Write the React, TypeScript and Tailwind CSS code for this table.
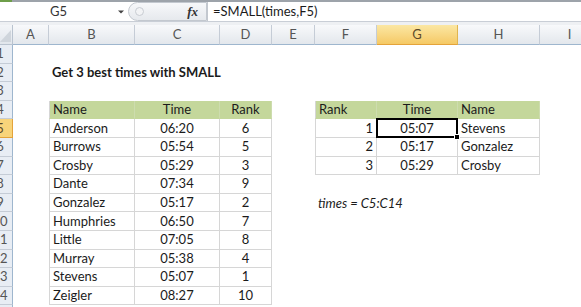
import React from "react";

type Cell = {
  text?: string;
  align?: "left" | "center" | "right";
  kind?: "head" | "body";
  bold?: boolean;
  italic?: boolean;
  overflow?: boolean;
  selected?: boolean;
};

const COLS = [
  { key: "A", w: 36 },
  { key: "B", w: 86 },
  { key: "C", w: 85 },
  { key: "D", w: 52 },
  { key: "E", w: 43 },
  { key: "F", w: 62 },
  { key: "G", w: 81 },
  { key: "H", w: 82 },
  { key: "I", w: 60 },
];

const left = [
  ["Anderson", "06:20", "6"],
  ["Burrows", "05:54", "5"],
  ["Crosby", "05:29", "3"],
  ["Dante", "07:34", "9"],
  ["Gonzalez", "05:17", "2"],
  ["Humphries", "06:50", "7"],
  ["Little", "07:05", "8"],
  ["Murray", "05:38", "4"],
  ["Stevens", "05:07", "1"],
  ["Zeigler", "08:27", "10"],
];

const right = [
  ["1", "05:07", "Stevens"],
  ["2", "05:17", "Gonzalez"],
  ["3", "05:29", "Crosby"],
];

function buildRows(): Record<string, Cell>[] {
  const rows: Record<string, Cell>[] = [];
  for (let r = 1; r <= 15; r++) rows.push({});
  rows[1].B = { text: "Get 3 best times with SMALL", bold: true, overflow: true };
  rows[3].B = { text: "Name", kind: "head", align: "left" };
  rows[3].C = { text: "Time", kind: "head", align: "center" };
  rows[3].D = { text: "Rank", kind: "head", align: "center" };
  rows[3].F = { text: "Rank", kind: "head", align: "left" };
  rows[3].G = { text: "Time", kind: "head", align: "center" };
  rows[3].H = { text: "Name", kind: "head", align: "left" };
  left.forEach((d, i) => {
    rows[4 + i].B = { text: d[0], kind: "body", align: "left" };
    rows[4 + i].C = { text: d[1], kind: "body", align: "center" };
    rows[4 + i].D = { text: d[2], kind: "body", align: "center" };
  });
  right.forEach((d, i) => {
    rows[4 + i].F = { text: d[0], kind: "body", align: "right" };
    rows[4 + i].G = { text: d[1], kind: "body", align: "center", selected: i === 0 };
    rows[4 + i].H = { text: d[2], kind: "body", align: "left" };
  });
  rows[8].F = { text: "times = C5:C14", italic: true, overflow: true };
  return rows;
}

const FONT = { fontFamily: "Lato, 'Open Sans', sans-serif" };

function SheetCell({ cell, w, first, firstCol }: { cell?: Cell; w: number; first: boolean; firstCol: boolean }) {
  const c = cell || {};
  const alignCls =
    c.align === "center" ? "justify-center" : c.align === "right" ? "justify-end pr-[3px]" : "justify-start pl-[3px]";
  let boxCls = "";
  if (c.kind === "head") {
    boxCls = "bg-[#c4d79b] border-r border-b border-r-[#cddcae] border-b-[#c4d79b]";
  } else if (c.kind === "body") {
    boxCls = "bg-white border-r border-b border-[#d6d6d6]";
  }
  if (c.kind && firstCol) boxCls += " border-l border-l-[#d6d6d6]";
  return (
    <div
      className={`relative flex h-full shrink-0 items-center ${alignCls} ${boxCls}`}
      style={{ width: w }}
    >
      {c.text && (
        <span
          className={`whitespace-nowrap text-[13px] leading-none text-[#1b1b1b] ${c.bold ? "font-bold" : ""} ${
            c.italic ? "italic" : ""
          } ${c.overflow ? "relative z-10" : ""}`}
        >
          {c.text}
        </span>
      )}
      {c.selected && (
        <div className="pointer-events-none absolute -left-[1px] -top-[1px] -right-[1px] -bottom-[1px] z-20 border-2 border-black">
          <div className="absolute -bottom-[4px] -right-[4px] h-[6px] w-[6px] border border-white bg-black" />
        </div>
      )}
    </div>
  );
}

export default function App() {
  const rows = buildRows();
  const firstColFor: Record<string, boolean> = { B: true, F: true };
  return (
    <div className="h-[307px] w-[581px] overflow-hidden bg-white" style={FONT}>
      {/* top thin line */}
      <div className="flex h-[2px]">
        <div className="w-[12px] bg-[#6e9e4a]" />
        <div className="flex-1 bg-[#9da3aa]" />
      </div>
      {/* formula bar */}
      <div className="flex h-[20px] items-stretch border-b border-[#c9ced6] bg-white">
        <div className="flex w-[128px] items-center">
          <div className="flex-1 text-center text-[13px] text-[#333]">G5</div>
          <svg width="8" height="6" viewBox="0 0 8 6" className="mr-[3px]">
            <path d="M1 1.5 L4 4.5 L7 1.5 Z" fill="#444" />
          </svg>
        </div>
        <div className="flex w-[79px] items-center rounded-l-full border border-[#c3c8cf] bg-gradient-to-b from-[#f7f8fa] to-[#e6e9ed]">
          <div className="ml-[6px] h-[9px] w-[9px] rounded-full border border-[#c8ccd2] bg-[#f2f3f5]" />
          <div className="flex-1" />
          <span
            className="mr-[8px] text-[13px] font-bold italic text-[#333]"
            style={{ fontFamily: "'Liberation Serif', serif" }}
          >
            fx
          </span>
        </div>
        <div className="flex flex-1 items-center border-l border-[#c3c8cf] pl-[5px] text-[13px] text-[#1b1b1b]">
          =SMALL(times,F5)
        </div>
      </div>
      <div className="h-[3px] bg-[#eef0f3]" />
      {/* column headers */}
      <div className="flex h-[20px]">
        <div className="relative h-full w-[13px] shrink-0 border-r border-b border-[#b9c3cf] bg-gradient-to-b from-[#f3f5f8] to-[#e1e6ec]">
          <svg width="12" height="19" viewBox="0 0 12 19" className="absolute left-0 top-0">
            <path d="M11 5 L11 17 L0 17 Z" fill="#cfd5dc" />
          </svg>
        </div>
        {COLS.map((col) => {
          const active = col.key === "G";
          return (
            <div
              key={col.key}
              className={`flex h-full shrink-0 items-center justify-center border-r border-b text-[13px] ${
                active
                  ? "border-r-[#e0b54f] border-b-[#e4a33a] bg-gradient-to-b from-[#fbe7a3] to-[#f5c964] text-[#5a4a2a]"
                  : "border-r-[#c5ccd6] border-b-[#9eb6ce] bg-gradient-to-b from-[#f8f9fb] to-[#e3e7ec] text-[#555]"
              }`}
              style={{ width: col.w }}
            >
              {col.key}
            </div>
          );
        })}
      </div>
      {/* rows */}
      {rows.map((row, i) => {
        const rn = i + 1;
        const active = rn === 5;
        return (
          <div key={rn} className="flex h-[18.6px]">
            <div
              className={`h-full w-[13px] shrink-0 overflow-hidden border-b border-r ${
                active
                  ? "border-b-[#e4a33a] border-r-[#e4a33a] bg-[#f8d47a] text-[#5a4a2a]"
                  : "border-b-[#c5ccd6] border-r-[#9eb6ce] bg-[#e8edf4] text-[#555]"
              }`}
            >
              <div className="ml-[-13px] flex h-full w-[26px] items-center justify-center text-[13px] leading-none">
                {rn}
              </div>
            </div>
            {COLS.map((col) => (
              <SheetCell
                key={col.key}
                cell={row[col.key]}
                w={col.w}
                first={rn === 4}
                firstCol={!!firstColFor[col.key]}
              />
            ))}
          </div>
        );
      })}
    </div>
  );
}
